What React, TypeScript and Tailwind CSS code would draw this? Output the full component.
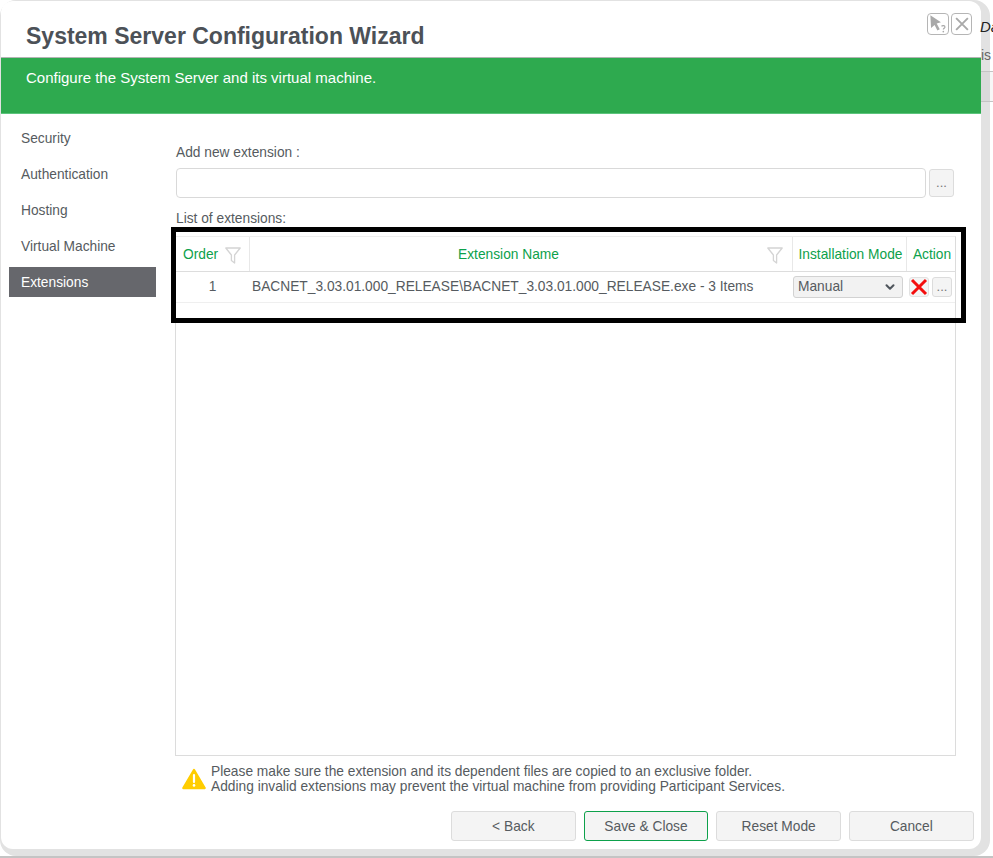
import { ChevronDown } from 'lucide-react';

const NAV_ITEMS = ['Security', 'Authentication', 'Hosting', 'Virtual Machine', 'Extensions'];
const FOOTER_BUTTONS = ['< Back', 'Save & Close', 'Reset Mode', 'Cancel'];

function FilterIcon() {
  return (
    <svg width="16" height="17" viewBox="0 0 16 17" fill="none" className="shrink-0">
      <path d="M0.8 1h14.4L9.6 8v8L6.4 13.6V8z" stroke="#d4d4d4" strokeWidth="1.3" strokeLinejoin="round" />
    </svg>
  );
}

function DotsButton({ className }: { className: string }) {
  return (
    <button className={`flex items-center justify-center rounded-[3px] border border-[#dcdcdc] bg-[#f4f4f4] text-[13px] text-[#777] ${className}`}>
      ...
    </button>
  );
}

function WarningIcon() {
  return (
    <svg width="24" height="22" viewBox="0 0 24 22" className="shrink-0">
      <path d="M12 2L22.6 20H1.4z" fill="#ffcd00" stroke="#ffcd00" strokeWidth="2.4" strokeLinejoin="round" />
      <path d="M12 7v7" stroke="#fff" strokeWidth="2.2" strokeLinecap="round" />
      <circle cx="12" cy="17.4" r="1.3" fill="#fff" />
    </svg>
  );
}

export default function App() {
  return (
    <div className="relative h-[858px] w-[993px] overflow-hidden bg-white font-['Liberation_Sans',Arial,sans-serif] text-[#565b60]">
      <div className="absolute bottom-0 left-0 h-[2px] w-full bg-[#c4c4c4]" />

      <div className="relative h-[856px] w-[990px] rounded-[16px] bg-[#e2e2e2] pb-[7px] pl-[1px] pr-[9px] pt-[1px]">
        <div className="flex h-full flex-col overflow-hidden rounded-[12px] bg-white">
          <div className="flex h-[56px] items-start justify-between pl-[25px] pr-[9px] pt-[20px]">
            <h1 className="text-[23px] font-bold leading-[30px] text-[#4c5157]">System Server Configuration Wizard</h1>
            <div className="-mt-[8px] flex gap-[2px]">
              <button className="flex h-[22px] w-[22px] items-center justify-center rounded-[4px] border border-[#b5b5b5]">
                <svg width="20" height="20" viewBox="0 0 17 17">
                  <path d="M2 1l9 6-3.6 1L10 13l-2 1-2.4-4.6L2.6 12z" fill="#a9a9a9" />
                  <path d="M11.5 10.5c.6-1 2.9-.9 2.9.5 0 1.1-1.3 1.1-1.4 2.2" stroke="#a9a9a9" strokeWidth="1" fill="none" />
                  <circle cx="13" cy="15" r=".7" fill="#a9a9a9" />
                </svg>
              </button>
              <button className="flex h-[22px] w-[21px] items-center justify-center rounded-[4px] border border-[#b5b5b5]">
                <svg width="16" height="16" viewBox="0 0 15 15">
                  <path d="M2 2l11 11M13 2L2 13" stroke="#a9a9a9" strokeWidth="1.8" />
                </svg>
              </button>
            </div>
          </div>

          <div className="h-[57px] border-b border-t border-b-[#5cc47c] border-t-[#b4b4b4] bg-[#2eaa4f] pl-[25px] pt-[11px] text-[15px] leading-[18px] text-white">
            Configure the System Server and its virtual machine.
          </div>

          <div className="flex flex-1 text-[13.75px]">
            <nav className="ml-[8px] mt-[9px] flex w-[147px] shrink-0 flex-col gap-[6px]">
              {NAV_ITEMS.map((item) => (
                <div
                  key={item}
                  className={
                    item === 'Extensions'
                      ? 'flex h-[30px] items-center bg-[#66676c] pl-[12px] pt-[2px] text-white'
                      : 'flex h-[30px] items-center pl-[12px] pt-[2px]'
                  }
                >
                  {item}
                </div>
              ))}
            </nav>

            <main className="ml-[20px] flex w-[780px] flex-col">
              <label className="mt-[30px] leading-[17px]">Add new extension :</label>
              <div className="mt-[7px] flex items-center gap-[3px]">
                <input className="h-[30px] w-[750px] rounded-[4px] border border-[#d9d9d9] bg-white" />
                <DotsButton className="h-[28px] w-[25px]" />
              </div>
              <label className="mt-[12px] leading-[17px]">List of extensions:</label>

              <div className="-ml-[1px] mt-[9px] flex h-[520px] w-[781px] flex-col border border-[#dcdcdc] border-t-[#eeeeee]">
                <div className="flex h-[35px] border-b border-[#dddddd] text-[#0da14b]">
                  <div className="flex w-[74px] items-center justify-between border-r border-[#e8e8e8] pl-[7px] pr-[8px] pt-[2px]">
                    Order
                    <FilterIcon />
                  </div>
                  <div className="flex w-[543px] items-center border-r border-[#e8e8e8] pr-[9px] pt-[2px]">
                    <span className="flex-1 text-center">Extension Name</span>
                    <FilterIcon />
                  </div>
                  <div className="flex w-[114px] items-center justify-center whitespace-nowrap border-r border-[#e8e8e8] pl-[2px] pt-[2px]">
                    Installation Mode
                  </div>
                  <div className="flex flex-1 items-center justify-center pl-[2px] pt-[2px]">Action</div>
                </div>

                <div className="flex h-[31px] items-center border-b border-[#efefef]">
                  <div className="w-[73px] text-center">1</div>
                  <div className="w-[544px] whitespace-nowrap pl-[3px]">
                    BACNET_3.03.01.000_RELEASE\BACNET_3.03.01.000_RELEASE.exe - 3 Items
                  </div>
                  <div className="flex h-[22px] w-[110px] items-center justify-between rounded-[3px] border border-[#d2d2d2] bg-[#f2f2f2] pl-[4px] pr-[5px]">
                    Manual
                    <ChevronDown size={14} strokeWidth={3.5} className="text-[#4f555c]" />
                  </div>
                  <div className="ml-[6px] flex items-center gap-[3px]">
                    <button className="flex h-[20px] w-[20px] items-center justify-center rounded-[3px] border border-[#e2e2e2] bg-[#f4f4f4]">
                      <svg width="18" height="18" viewBox="0 0 18 18">
                        <path d="M2 2l14 14M16 2L2 16" stroke="#f40d0d" strokeWidth="3" />
                      </svg>
                    </button>
                    <DotsButton className="h-[20px] w-[20px]" />
                  </div>
                </div>
              </div>

              <div className="ml-[6px] mt-[8px] flex items-center gap-[5px] leading-[15px]">
                <WarningIcon />
                <p className="whitespace-nowrap">
                  Please make sure the extension and its dependent files are copied to an exclusive folder.
                  <br />
                  Adding invalid extensions may prevent the virtual machine from providing Participant Services.
                </p>
              </div>

              <div className="ml-[275px] mt-[17px] flex gap-[8px]">
                {FOOTER_BUTTONS.map((label) => (
                  <button
                    key={label}
                    className={
                      label === 'Save & Close'
                        ? 'h-[30px] w-[124.67px] shrink-0 rounded-[3px] border border-[#0da14b] bg-[#f4f4f4] pt-[2px]'
                        : 'h-[30px] w-[124.67px] shrink-0 rounded-[3px] border border-[#dcdcdc] bg-[#f4f4f4] pt-[2px]'
                    }
                  >
                    {label}
                  </button>
                ))}
              </div>
            </main>
          </div>
        </div>
      </div>

      <span className="absolute left-[980px] top-[16px] text-[15px] italic text-[#222]">Da</span>
      <span className="absolute left-[981px] top-[45px] text-[14px] text-[#666]">is</span>
      <div className="absolute left-[981px] top-[71px] h-[31px] w-[12px] border-y border-[#c4c4c4] bg-black/[0.03]" />

      {/* highlight drawn over the screenshot */}
      <div className="pointer-events-none absolute left-[171px] top-[227px] h-[96px] w-[795px] border-[5px] border-black" />
    </div>
  );
}
